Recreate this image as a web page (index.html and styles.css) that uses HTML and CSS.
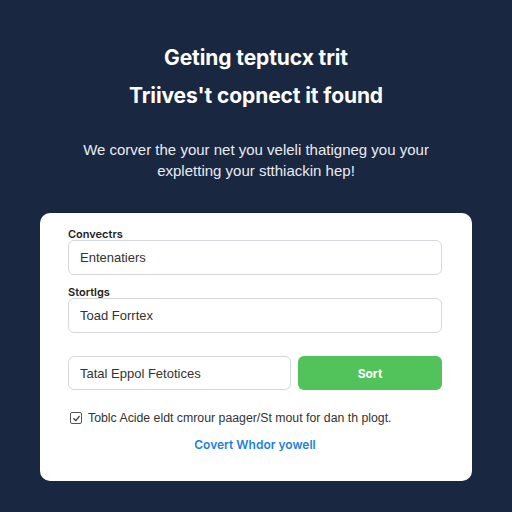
FILE: index.html
```html
<!DOCTYPE html>
<html lang="en">
<head>
  <meta charset="UTF-8" />
  <meta name="viewport" content="width=device-width, initial-scale=1.0" />
  <title>Connect</title>
  <link rel="stylesheet" href="styles.css">
</head>
<body>

  <div class="page">
    <h1>Geting teptucx trit</h1>
    <h2>Triives't copnect it found</h2>
    <p class="sub">We corver the your net you veleli thatigneg you your<br>expletting your stthiackin hep!</p>

    <div class="card">
      <label class="field-label">Convectrs</label>
      <input type="text" value="Entenatiers" />

      <label class="field-label">Stortlgs</label>
      <input type="text" value="Toad Forrtex" />

      <div class="row">
        <input type="text" value="Tatal Eppol Fetotices" />
        <button class="sort">Sort</button>
      </div>

      <div class="checkbox">
        <span class="box">
          <svg width="9" height="9" viewBox="0 0 10 10"><path d="M2 5.2 L4.2 7.4 L8 2.6" fill="none" stroke="#333" stroke-width="1.4" stroke-linecap="round" stroke-linejoin="round"/></svg>
        </span>
        <span>Toblc Acide eldt cmrour paager/St mout for dan th plogt.</span>
      </div>

      <a href="#" class="link">Covert Whdor yowell</a>
    </div>
  </div>

</body>
</html>
```

FILE: styles.css
```css
:root {
  --fondo: #1a2740;
  --blanco: #ffffff;
  --verde: #52c25a;
  --azul: #1f7fdc;
  --borde: #d4d7dc;
  --fuente: 'Inter', 'Liberation Sans', sans-serif;
  --fuente-texto: 'Liberation Sans', Arial, sans-serif;
}

* {
  margin: 0;
  padding: 0;
  box-sizing: border-box;
  font-family: var(--fuente);
}

body {
  background-color: var(--fondo);
  color: var(--blanco);
  width: 512px;
  height: 512px;
  overflow: hidden;
}

.page {
  padding: 44px 40px 0;
  text-align: center;
}

h1 {
  font-size: 21px;
  font-weight: 700;
  line-height: 28px;
  letter-spacing: -0.1px;
}

h2 {
  font-size: 21px;
  font-weight: 700;
  line-height: 28px;
  margin-top: 10px;
  letter-spacing: -0.1px;
}

p.sub {
  font-family: var(--fuente-texto);
  font-size: 15px;
  line-height: 21px;
  margin-top: 29px;
  color: #e8ecf2;
}

.card {
  margin-top: 32px;
  background: var(--blanco);
  border-radius: 10px;
  padding: 15px 30px 29px 28px;
  text-align: left;
  color: #222;
}

.field-label {
  display: block;
  font-size: 11px;
  line-height: 12px;
  font-weight: 600;
  color: #222;
}

input[type="text"] {
  width: 100%;
  height: 35px;
  padding: 0 11px;
  border: 1px solid var(--borde);
  border-radius: 6px;
  font-family: var(--fuente-texto);
  font-size: 13px;
  color: #333;
  background: #fff;
  margin-bottom: 11px;
}

.row {
  display: flex;
  gap: 7px;
  margin-top: 12px;
}

.row input[type="text"] {
  flex: 1 1 auto;
  height: 34px;
  margin-bottom: 0;
}

.sort {
  flex: 0 0 144px;
  height: 34px;
  border: none;
  border-radius: 6px;
  background: var(--verde);
  color: var(--blanco);
  font-size: 12px;
  font-weight: 700;
}

.checkbox {
  display: flex;
  align-items: center;
  gap: 6px;
  margin-top: 20px;
  font-family: var(--fuente-texto);
  font-size: 12.3px;
  line-height: 16px;
  color: #333;
}

.checkbox span {
  font-family: var(--fuente-texto);
}

.box {
  width: 12px;
  height: 12px;
  border: 1px solid #555;
  border-radius: 2px;
  display: flex;
  align-items: center;
  justify-content: center;
  margin-left: 2px;
}

.link {
  display: block;
  text-align: center;
  color: var(--azul);
  font-size: 12px;
  line-height: 14px;
  font-weight: 600;
  text-decoration: none;
  margin-top: 12px;
}
```
